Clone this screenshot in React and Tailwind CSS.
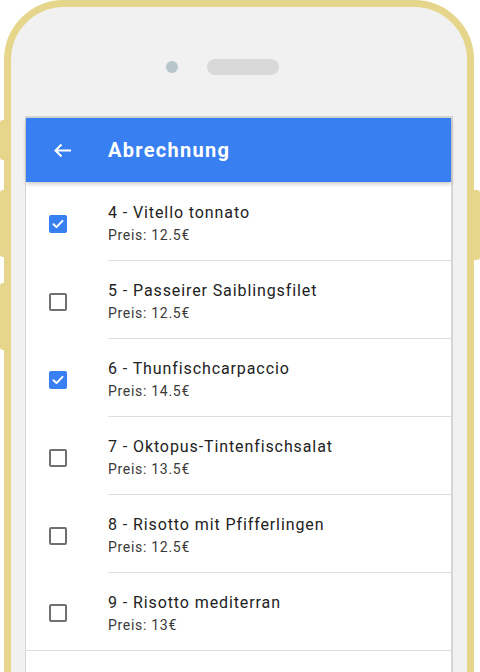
import { useState } from 'react'

const ITEMS = [
  { id: 4, name: 'Vitello tonnato', price: '12.5', checked: true },
  { id: 5, name: 'Passeirer Saiblingsfilet', price: '12.5', checked: false },
  { id: 6, name: 'Thunfischcarpaccio', price: '14.5', checked: true },
  { id: 7, name: 'Oktopus-Tintenfischsalat', price: '13.5', checked: false },
  { id: 8, name: 'Risotto mit Pfifferlingen', price: '12.5', checked: false },
  { id: 9, name: 'Risotto mediterran', price: '13', checked: false },
]

function Checkbox({ checked, onChange }) {
  return (
    <button
      onClick={onChange}
      className={`w-[18px] h-[18px] rounded-[2px] flex items-center justify-center shrink-0 ${
        checked ? 'bg-[#3880f2]' : 'border-2 border-[#707070] bg-white'
      }`}
    >
      {checked && (
        <svg viewBox="0 0 18 18" className="w-[18px] h-[18px]">
          <path d="M4.5 9.2l3 2.9 6-6.2" fill="none" stroke="white" strokeWidth="2" strokeLinecap="round" strokeLinejoin="round" />
        </svg>
      )}
    </button>
  )
}

export default function App() {
  const [items, setItems] = useState(ITEMS)

  const toggle = (id) =>
    setItems((s) => s.map((it) => (it.id === id ? { ...it, checked: !it.checked } : it)))

  return (
    <div className="relative w-[480px] h-[672px] overflow-hidden bg-white font-['Roboto',sans-serif]">
      {/* side buttons */}
      <div className="absolute left-0 top-[120px] w-[8px] h-[40px] rounded-l-[3px] bg-[#e6d68b]" />
      <div className="absolute left-0 top-[190px] w-[8px] h-[67px] rounded-l-[3px] bg-[#e6d68b]" />
      <div className="absolute left-0 top-[283px] w-[8px] h-[67px] rounded-l-[3px] bg-[#e6d68b]" />
      <div className="absolute right-0 top-[190px] w-[10px] h-[70px] rounded-r-[3px] bg-[#e6d68b]" />

      {/* phone body */}
      <div className="relative ml-[4px] w-[470px] h-[900px] rounded-[60px] border-[7px] border-[#e6d68b] bg-[#f1f1f1] flex flex-col">
        <div className="mt-[52px] ml-[155px] flex items-center">
          <div className="w-[12px] h-[12px] rounded-full bg-[#b7c6cb]" />
          <div className="ml-[29px] w-[72px] h-[16px] rounded-full bg-[#d9d9d9]" />
        </div>

        {/* screen */}
        <div className="mt-[41px] mx-[14px] flex-1 bg-white border-t-2 border-r-2 border-l border-[#d6d6d6]">
          <div className="relative z-10 h-[64px] bg-[#3880f2] flex items-center shadow-[0_2px_4px_rgba(0,0,0,0.22)]">
            <button className="ml-[27px] w-[19px] h-[15px] flex">
              <svg viewBox="0 0 19 15" className="w-[19px] h-[15px]">
                <path d="M18 7.5H2.5M8.5 1.5L2.5 7.5l6 6" fill="none" stroke="white" strokeWidth="2" />
              </svg>
            </button>
            <h1 className="ml-[36px] text-[20px] font-bold text-white tracking-[1.3px]">Abrechnung</h1>
          </div>

          <div className="mt-px">
            {items.map((it, i) => (
              <div
                key={it.id}
                className={`h-[78px] flex ${i === items.length - 1 ? 'border-b border-[#dedede]' : ''}`}
              >
                <div className="w-[82px] flex items-center pl-[23px] pt-[3px]">
                  <Checkbox checked={it.checked} onChange={() => toggle(it.id)} />
                </div>
                <div
                  className={`flex-1 flex flex-col justify-center pt-[3px] ${
                    i === items.length - 1 ? '' : 'border-b border-[#dedede]'
                  }`}
                >
                  <div className="text-[16px] leading-[24px] text-[#222] tracking-[0.9px]">
                    {it.id} - {it.name}
                  </div>
                  <div className="text-[14px] leading-[20px] text-[#3a3a3a] tracking-[0.7px]">Preis: {it.price}€</div>
                </div>
              </div>
            ))}
          </div>
        </div>
      </div>
    </div>
  )
}
